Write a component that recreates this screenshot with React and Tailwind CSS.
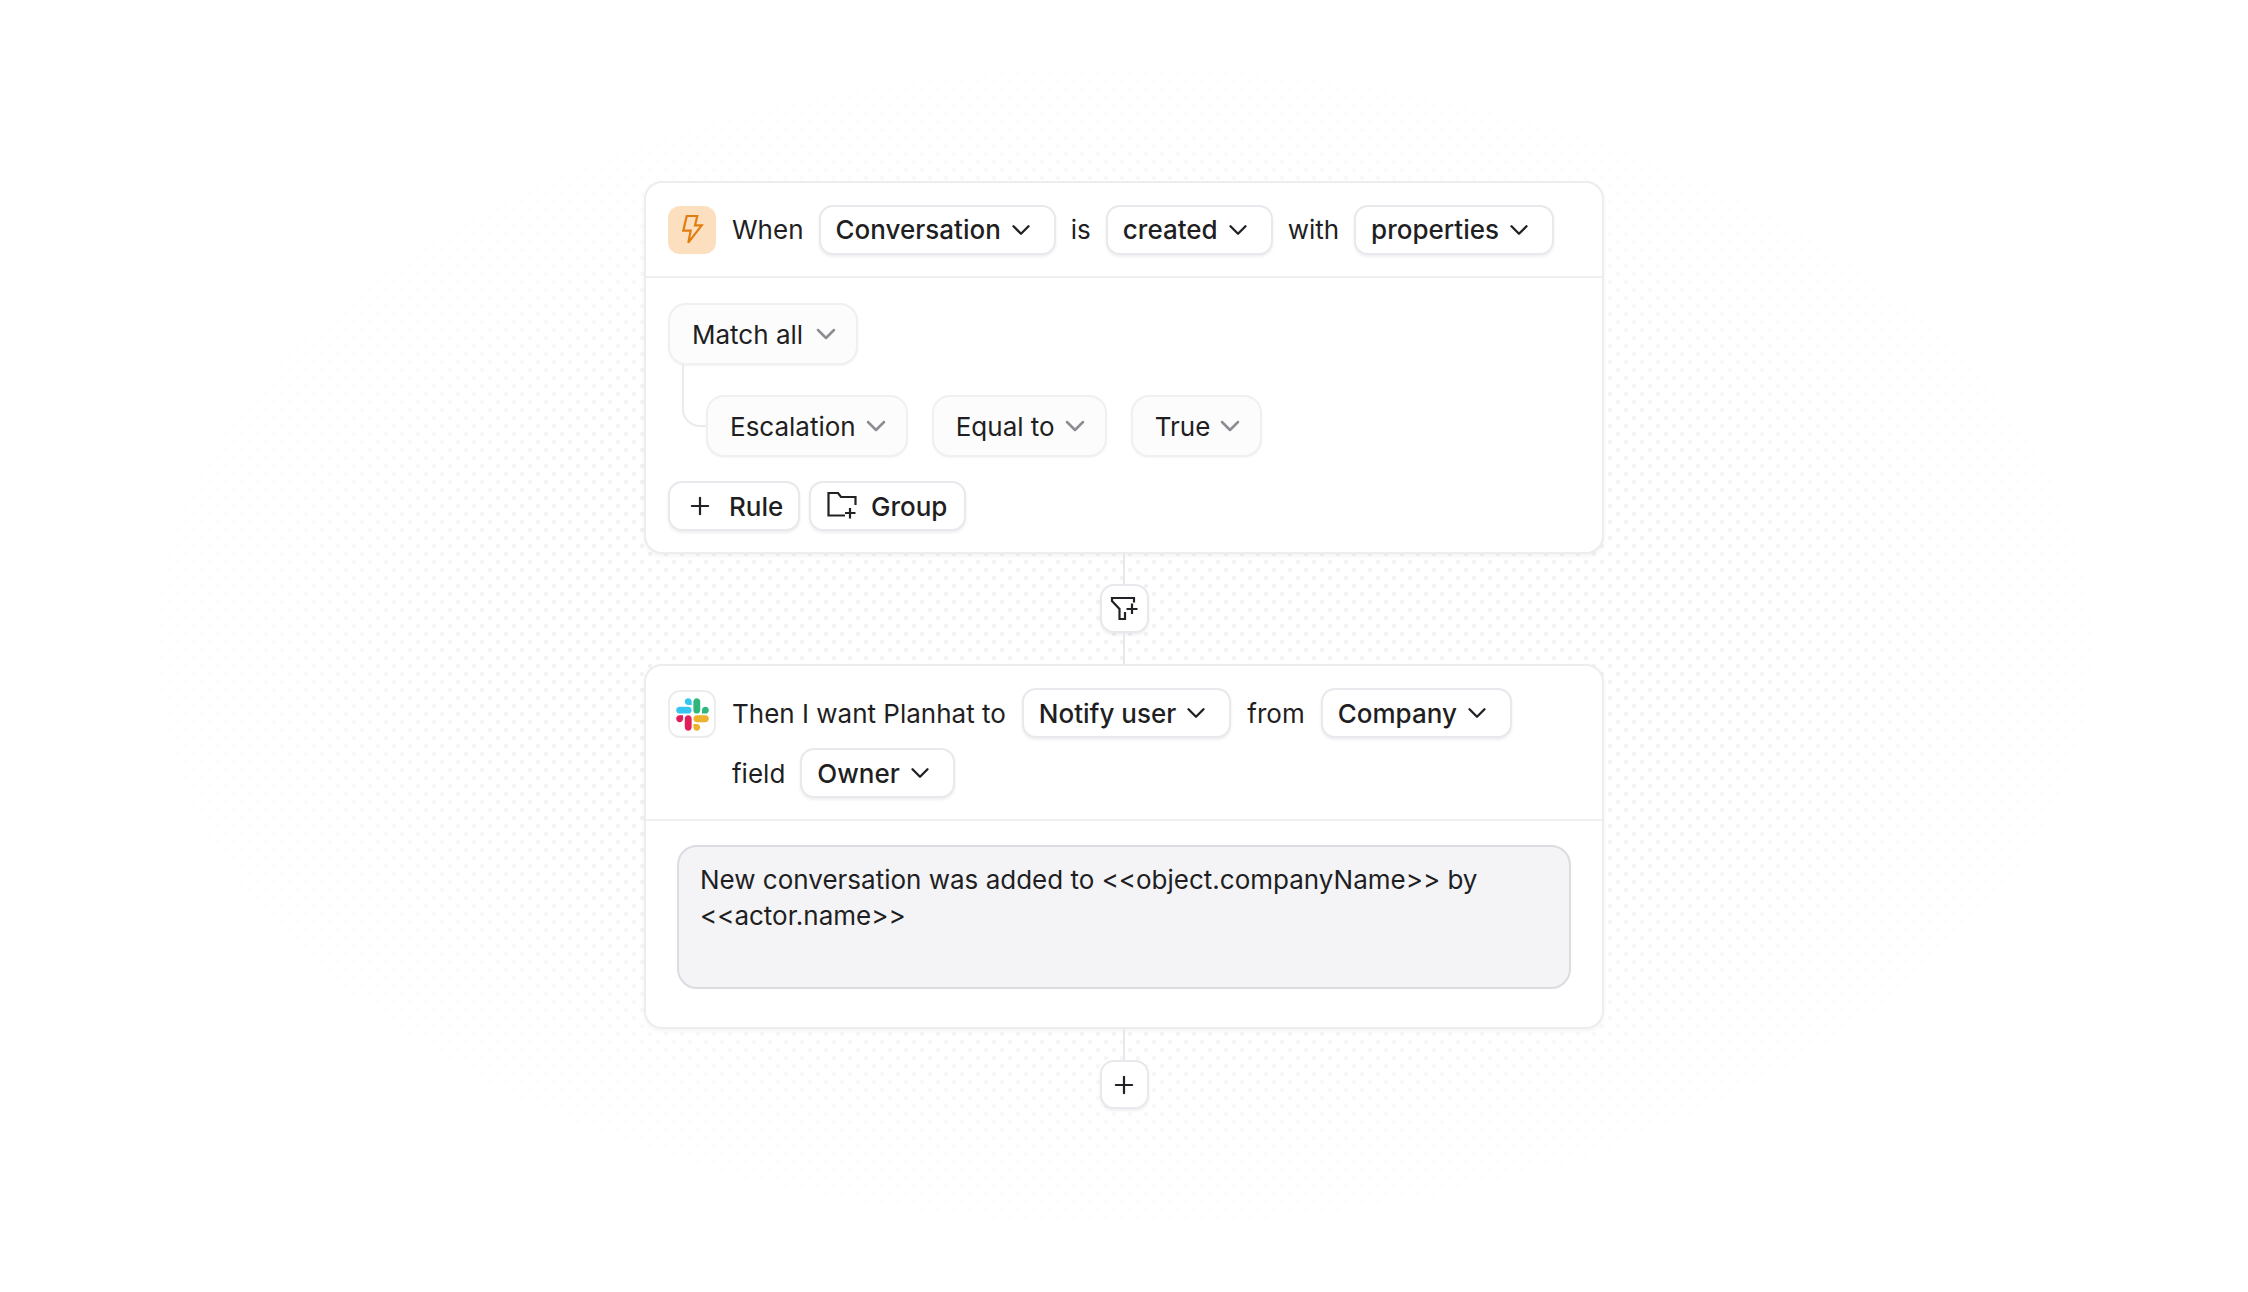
import React from 'react';
import { ChevronDown, Plus } from 'lucide-react';

const Chip = ({ label }) => (
  <div className="flex h-[50px] items-center rounded-[14px] border-2 border-[#e9e9ed] bg-white pl-[15px] pr-[18px] text-[26px] font-medium shadow-[0_2px_3px_rgba(30,30,60,0.07)]">
    <span>{label}</span>
    <ChevronDown size={30} strokeWidth={1.9} className="ml-[5px] text-[#222226]" />
  </div>
);

const Pill = ({ label, className = '' }) => (
  <div className={`flex h-[62px] items-center rounded-[18px] border-2 border-[#f0f0f2] bg-[#fcfcfc] pl-[22px] pr-[14px] text-[26px] shadow-[0_1px_2px_rgba(30,30,60,0.05)] ${className}`}>
    <span>{label}</span>
    <ChevronDown size={32} strokeWidth={1.9} className="ml-[4px] text-[#8c8c92]" />
  </div>
);

const BoltIcon = () => (
  <div className="mr-[1px] flex h-12 w-12 shrink-0 items-center justify-center rounded-[12px] bg-[#fcdfbf]">
    <svg width="48" height="48" viewBox="0 0 48 48" fill="none" stroke="#e27d0f" strokeWidth="2.2" strokeLinejoin="miter">
      <path d="M18.7 10H29.3L27 19.3H33.7L20.3 36.7L22.7 24.7H15.3Z" />
    </svg>
  </div>
);

const SlackIcon = () => (
  <div className="flex h-12 w-12 shrink-0 items-center justify-center rounded-[12px] border-2 border-[#ededf0] bg-white">
    <svg width="33" height="33" viewBox="0 0 127 127">
      <path fill="#E01E5A" d="M27.2 80c0 7.3-5.9 13.2-13.2 13.2C6.7 93.2.8 87.3.8 80c0-7.3 5.9-13.2 13.2-13.2h13.2V80zm6.6 0c0-7.3 5.9-13.2 13.2-13.2 7.3 0 13.2 5.9 13.2 13.2v33c0 7.3-5.9 13.2-13.2 13.2-7.3 0-13.2-5.9-13.2-13.2V80z" />
      <path fill="#36C5F0" d="M47 27c-7.3 0-13.2-5.9-13.2-13.2C33.8 6.5 39.7.6 47 .6c7.3 0 13.2 5.9 13.2 13.2V27H47zm0 6.7c7.3 0 13.2 5.9 13.2 13.2 0 7.3-5.9 13.2-13.2 13.2H13.9C6.6 60.1.7 54.2.7 46.9c0-7.3 5.9-13.2 13.2-13.2H47z" />
      <path fill="#2EB67D" d="M99.9 46.9c0-7.3 5.9-13.2 13.2-13.2 7.3 0 13.2 5.9 13.2 13.2 0 7.3-5.9 13.2-13.2 13.2H99.9V46.9zm-6.6 0c0 7.3-5.9 13.2-13.2 13.2-7.3 0-13.2-5.9-13.2-13.2V13.8C66.9 6.5 72.8.6 80.1.6c7.3 0 13.2 5.9 13.2 13.2v33.1z" />
      <path fill="#ECB22E" d="M80.1 99.8c7.3 0 13.2 5.9 13.2 13.2 0 7.3-5.9 13.2-13.2 13.2-7.3 0-13.2-5.9-13.2-13.2V99.8h13.2zm0-6.6c-7.3 0-13.2-5.9-13.2-13.2 0-7.3 5.9-13.2 13.2-13.2h33.1c7.3 0 13.2 5.9 13.2 13.2 0 7.3-5.9 13.2-13.2 13.2H80.1z" />
    </svg>
  </div>
);

const FolderPlus = () => (
  <svg width="32" height="32" viewBox="0 0 32 32" fill="none" stroke="#222226" strokeWidth="2.2">
    <path d="M19 25.5H2.5V3H12L15 7H29.5V15" />
    <path d="M24 18V28.5M19 23H29.5" />
  </svg>
);

const FilterPlus = () => (
  <svg width="45" height="45" viewBox="1 0 45 45" fill="none" stroke="#222226" strokeWidth="2.2">
    <path d="M33 16.5V12H11V15L18.5 23V33H24V26" />
    <path d="M31 17.5V28M25.5 23H36.5" />
  </svg>
);

const SquareButton = ({ children }) => (
  <div className="flex h-[49px] w-[49px] items-center justify-center rounded-[14px] border-2 border-[#e9e9ed] bg-white shadow-[0_2px_3px_rgba(30,30,60,0.07)]">
    {children}
  </div>
);

const Connector = ({ className }) => <div className={`w-[2px] bg-[#e8e8eb] ${className}`} />;

const App = () => {
  return (
    <div className="relative h-[1292px] w-full overflow-hidden bg-white font-['Inter',sans-serif] text-[#1f1f23]">
      {/* dotted backdrop */}
      <div className="absolute inset-0 bg-[radial-gradient(circle,#f2f2f4_2px,transparent_2.4px),radial-gradient(circle,#f2f2f4_2px,transparent_2.4px)] bg-[length:16px_16px] bg-[position:-6px_-6px,2px_2px] [mask-image:radial-gradient(ellipse_1020px_610px_at_1124px_646px,#000_55%,transparent_100%)]" />

      <div className="relative mx-auto flex w-[960px] flex-col items-center pt-[181px]">
        <div className="w-full rounded-[18px] border-2 border-[#ededf0] bg-white shadow-[0_2px_4px_rgba(30,30,60,0.05)]">
          <div className="flex h-[95px] items-center gap-[15px] border-b-2 border-[#efeff1] px-[22px] text-[26px]">
            <BoltIcon />
            <span>When</span>
            <Chip label="Conversation" />
            <span>is</span>
            <Chip label="created" />
            <span>with</span>
            <Chip label="properties" />
          </div>

          <div className="px-[22px] pt-[25px] pb-[21px]">
            <Pill label="Match all" className="w-[190px] justify-between" />
            <div className="relative mt-[30px] ml-[38px] flex gap-[24px]">
              <div className="absolute -left-[24px] -top-[31px] h-[63px] w-[24px] rounded-bl-[18px] border-b-2 border-l-2 border-[#ebebee]" />
              <Pill label="Escalation" />
              <Pill label="Equal to" />
              <Pill label="True" />
            </div>
            <div className="mt-[24px] flex gap-[9px] text-[26px] font-medium">
              <div className="flex h-[50px] w-[132px] items-center rounded-[14px] border-2 border-[#e9e9ed] bg-white pl-[16px] shadow-[0_2px_3px_rgba(30,30,60,0.07)]">
                <Plus size={28} strokeWidth={1.9} className="text-[#222226]" />
                <span className="ml-[15px]">Rule</span>
              </div>
              <div className="flex h-[50px] w-[157px] items-center rounded-[14px] border-2 border-[#e9e9ed] bg-white pl-[15px] shadow-[0_2px_3px_rgba(30,30,60,0.07)]">
                <FolderPlus />
                <span className="ml-[13px]">Group</span>
              </div>
            </div>
          </div>
        </div>

        <Connector className="h-[30px]" />
        <SquareButton>
          <FilterPlus />
        </SquareButton>
        <Connector className="h-[31px]" />

        <div className="w-full rounded-[18px] border-2 border-[#ededf0] bg-white shadow-[0_2px_4px_rgba(30,30,60,0.05)]">
          <div className="flex gap-4 border-b-2 border-[#efeff1] px-[22px] pt-[22px] pb-[21px] text-[26px]">
            <div className="pt-[2px]">
              <SlackIcon />
            </div>
            <div className="flex flex-col gap-[10px]">
              <div className="flex items-center gap-[16px]">
                <span>Then I want Planhat to</span>
                <Chip label="Notify user" />
                <span>from</span>
                <Chip label="Company" />
              </div>
              <div className="flex items-center gap-[15px]">
                <span>field</span>
                <Chip label="Owner" />
              </div>
            </div>
          </div>
          <div className="px-[31px] pt-[24px] pb-[38px]">
            <div className="h-[144px] rounded-[20px] border-2 border-[#dcdce0] bg-[#f4f4f7] px-[21px] pt-[15px] text-[26px] leading-[36px]">
              New conversation was added to &lt;&lt;object.companyName&gt;&gt; by &lt;&lt;actor.name&gt;&gt;
            </div>
          </div>
        </div>

        <Connector className="h-[31px]" />
        <SquareButton>
          <Plus size={28} strokeWidth={1.9} className="text-[#222226]" />
        </SquareButton>
      </div>
    </div>
  );
};

export default App;
